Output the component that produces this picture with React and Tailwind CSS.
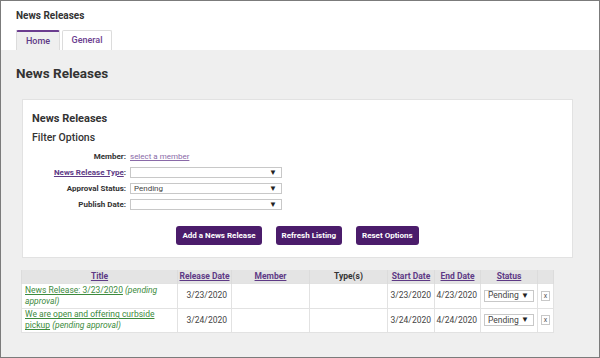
import React from 'react';

const FIELDS = [
  { label: 'News Release Type', link: true, value: '' },
  { label: 'Approval Status', value: 'Pending' },
  { label: 'Publish Date', value: '' },
];

const ROWS = [
  { title: 'News Release: 3/23/2020', release: '3/23/2020', start: '3/23/2020', end: '4/23/2020' },
  { title: 'We are open and offering curbside pickup', release: '3/24/2020', start: '3/24/2020', end: '4/24/2020' },
];

const FakeSelect = ({ value, className }) => (
  <div className={`flex items-center justify-between border border-[#c8c8c8] bg-white text-[#444] ${className}`}>
    <span className="pl-[3px]">{value}</span>
    <span className="pr-[4px] text-[8px] text-[#222]">▼</span>
  </div>
);

export default function App() {
  return (
    <div className="w-[600px] h-[358px] border border-[#7b7b7b] bg-[#efefef] font-['Roboto',sans-serif] text-[#333] overflow-hidden">
      {/* top bar with tabs */}
      <div className="bg-white pl-[15px] pt-[8px]">
        <div className="text-[10px] font-bold leading-[13px] text-[#333]">News Releases</div>
        <div className="flex gap-[2px] mt-[8px]">
          <div className="w-[44px] h-[20px] bg-[#efefef] border-t-2 border-x border-t-[#6b3d8f] border-x-[#dcdcdc] rounded-t-[2px] flex items-center justify-center text-[9px] text-[#5e3a86] font-medium pt-[2px]">
            Home
          </div>
          <div className="w-[50px] h-[20px] bg-white border border-b-0 border-[#dcdcdc] rounded-t-[2px] flex items-center justify-center text-[9px] text-[#6b3d8f] font-medium">
            General
          </div>
        </div>
      </div>

      <div className="px-[15px] pt-[14px]">
        <h1 className="text-[13.5px] font-bold leading-[18px] text-[#333]">News Releases</h1>

        {/* filter card */}
        <div className="mt-[17px] ml-[6px] w-[551px] bg-white border border-[#e2e2e2] pl-[9px] pt-[12px] pb-[12px]">
          <div className="text-[11px] font-bold leading-[14px]">News Releases</div>
          <div className="text-[10.5px] font-medium leading-[14px] mt-[5px]">Filter Options</div>

          <div className="mt-[6px] flex flex-col gap-[5px] text-[8px]">
            <div className="flex items-center h-[11px]">
              <div className="w-[94px] text-right font-bold">Member:</div>
              <span className="ml-[4px] text-[#8a6aa8] underline">select a member</span>
            </div>
            {FIELDS.map((f) => (
              <div key={f.label} className="flex items-center h-[11px]">
                <div className="w-[94px] text-right font-bold">
                  {f.link ? (
                    <><span className="text-[#5e3a86] underline">{f.label}</span>:</>
                  ) : (
                    `${f.label}:`
                  )}
                </div>
                <FakeSelect value={f.value} className="ml-[4px] w-[152px] h-[11px]" />
              </div>
            ))}
          </div>

          <div className="flex justify-center gap-[14px] mt-[16px] pr-[9px]">
            {['Add a News Release', 'Refresh Listing', 'Reset Options'].map((b) => (
              <button
                key={b}
                className="h-[19px] px-[6px] bg-[#4b1c6b] text-white text-[8px] font-bold rounded-[3px]"
              >
                {b}
              </button>
            ))}
          </div>
        </div>

        {/* listing table */}
        <table className="mt-[12px] ml-[5px] w-[532px] table-fixed border-collapse text-[8.5px]">
          <colgroup>
            <col className="w-[156px]" />
            <col className="w-[54px]" />
            <col className="w-[78px]" />
            <col className="w-[78px]" />
            <col className="w-[47px]" />
            <col className="w-[46px]" />
            <col className="w-[57px]" />
            <col className="w-[16px]" />
          </colgroup>
          <thead>
            <tr className="bg-[#e4e4e4] h-[13px] font-bold">
              {['Title', 'Release Date', 'Member'].map((h) => (
                <th key={h} className="border-x border-[#dcdcdc] text-[#5e3a86] underline font-bold">{h}</th>
              ))}
              <th className="border-x border-[#dcdcdc] font-bold text-[#333]">Type(s)</th>
              {['Start Date', 'End Date', 'Status'].map((h) => (
                <th key={h} className="border-x border-[#dcdcdc] text-[#5e3a86] underline font-bold">{h}</th>
              ))}
              <th className="border-x border-[#dcdcdc]"></th>
            </tr>
          </thead>
          <tbody>
            {ROWS.map((r, i) => (
              <tr key={r.title} className={`bg-white ${i === 0 ? 'h-[25px]' : 'h-[24px]'}`}>
                <td className="border border-[#e2e2e2] px-[3px] leading-[11px] text-[#3d8b3d]">
                  <span className="underline">{r.title}</span> <span className="italic">(pending approval)</span>
                </td>
                <td className="border border-[#e2e2e2] text-right pr-[4px] text-[#444]">{r.release}</td>
                <td className="border border-[#e2e2e2]"></td>
                <td className="border border-[#e2e2e2]"></td>
                <td className="border border-[#e2e2e2] text-right pr-[3px] text-[#444]">{r.start}</td>
                <td className="border border-[#e2e2e2] text-right pr-[3px] text-[#444]">{r.end}</td>
                <td className="border border-[#e2e2e2] px-[3px]">
                  <FakeSelect value="Pending" className="h-[12px] w-[50px] text-[8.5px]" />
                </td>
                <td className="border border-[#e2e2e2]">
                  <div className="mx-auto w-[9px] h-[10px] border border-[#c8c8c8] text-[7px] leading-[8px] text-center text-[#555]">x</div>
                </td>
              </tr>
            ))}
          </tbody>
        </table>
      </div>
    </div>
  );
}
